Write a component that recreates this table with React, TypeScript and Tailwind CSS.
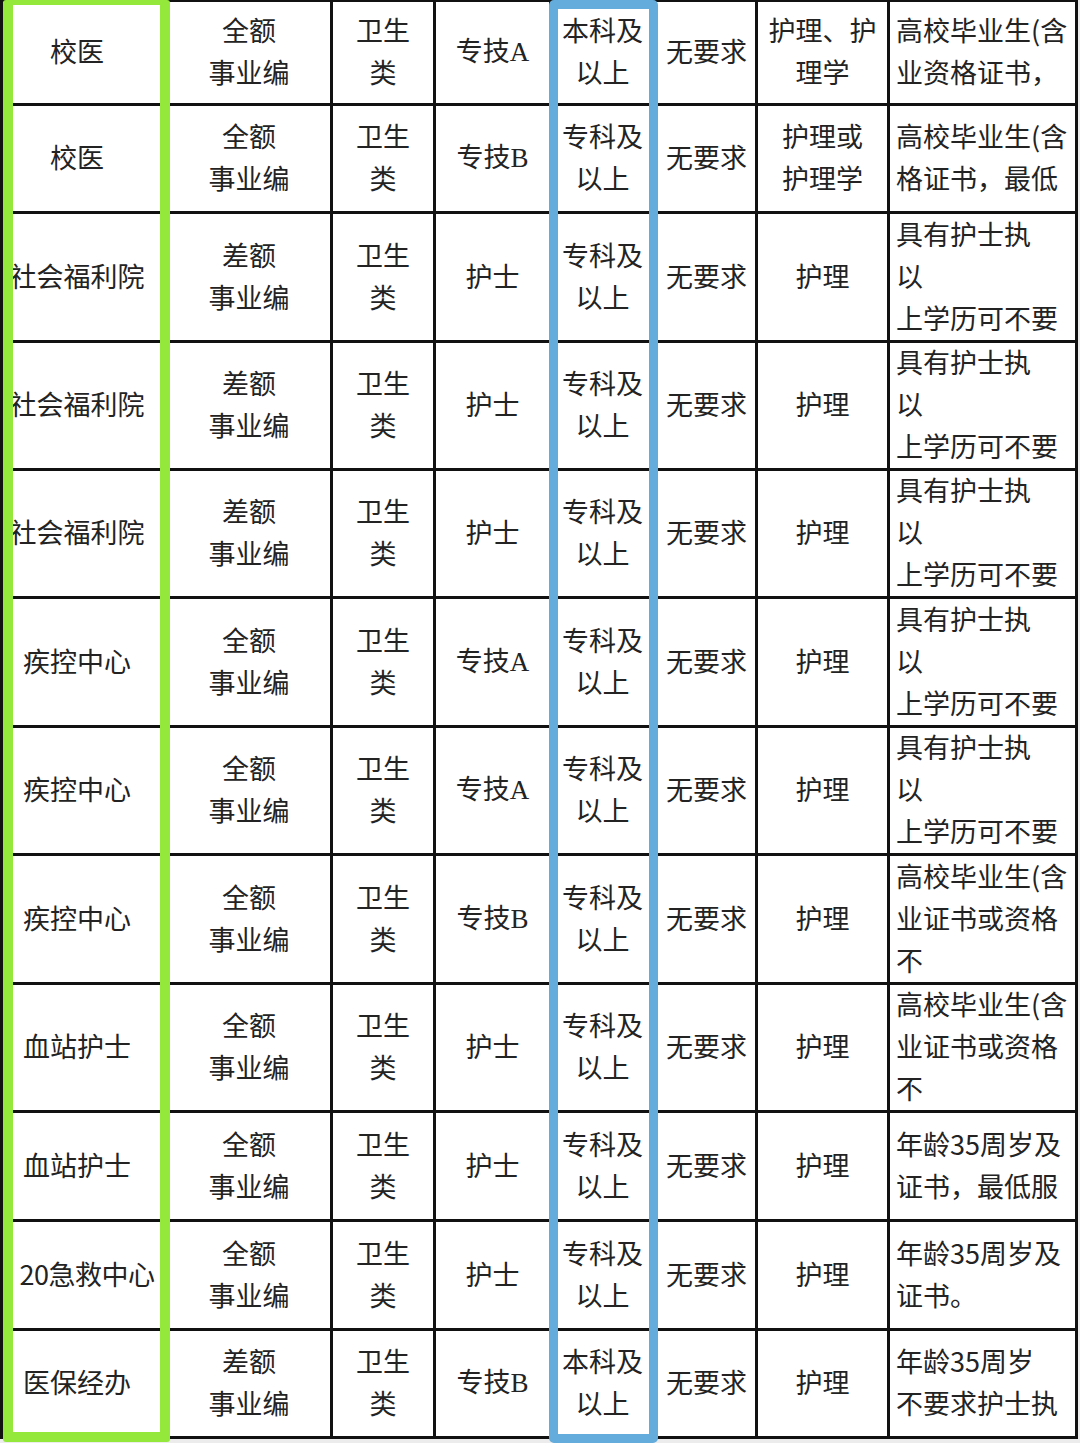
type Row = {
  unit: string;
  unitPad?: string;
  kind: string;
  post: string;
  level: string;
  edu: string;
  major: string[];
  note: string[];
};

const rows: Row[] = [
  { unit: "校医", kind: "全额", post: "专技A", level: "本科及", edu: "无要求", major: ["护理、护", "理学"], note: ["高校毕业生(含", "业资格证书，"] },
  { unit: "校医", kind: "全额", post: "专技B", level: "专科及", edu: "无要求", major: ["护理或", "护理学"], note: ["高校毕业生(含", "格证书，最低"] },
  { unit: "社会福利院", kind: "差额", post: "护士", level: "专科及", edu: "无要求", major: ["护理"], note: ["具有护士执", "以", "上学历可不要"] },
  { unit: "社会福利院", kind: "差额", post: "护士", level: "专科及", edu: "无要求", major: ["护理"], note: ["具有护士执", "以", "上学历可不要"] },
  { unit: "社会福利院", kind: "差额", post: "护士", level: "专科及", edu: "无要求", major: ["护理"], note: ["具有护士执", "以", "上学历可不要"] },
  { unit: "疾控中心", kind: "全额", post: "专技A", level: "专科及", edu: "无要求", major: ["护理"], note: ["具有护士执", "以", "上学历可不要"] },
  { unit: "疾控中心", kind: "全额", post: "专技A", level: "专科及", edu: "无要求", major: ["护理"], note: ["具有护士执", "以", "上学历可不要"] },
  { unit: "疾控中心", kind: "全额", post: "专技B", level: "专科及", edu: "无要求", major: ["护理"], note: ["高校毕业生(含", "业证书或资格", "不"] },
  { unit: "血站护士", kind: "全额", post: "护士", level: "专科及", edu: "无要求", major: ["护理"], note: ["高校毕业生(含", "业证书或资格", "不"] },
  { unit: "血站护士", kind: "全额", post: "护士", level: "专科及", edu: "无要求", major: ["护理"], note: ["年龄35周岁及", "证书，最低服"] },
  { unit: "20急救中心", unitPad: "pl-[8px] pr-[2px] tracking-[-0.5px]", kind: "全额", post: "护士", level: "专科及", edu: "无要求", major: ["护理"], note: ["年龄35周岁及", "证书。"] },
  { unit: "医保经办", kind: "差额", post: "专技B", level: "本科及", edu: "无要求", major: ["护理"], note: ["年龄35周岁", "不要求护士执"] },
];

const cell = "flex items-center justify-center bg-white pb-[3px] text-center leading-[42px] overflow-hidden whitespace-nowrap";

function Post({ text }: { text: string }) {
  const last = text.slice(-1);
  if (last === "A" || last === "B") {
    return (
      <span>
        {text.slice(0, -1)}
        <span className="font-['Liberation_Serif',serif]">{last}</span>
      </span>
    );
  }
  return <span>{text}</span>;
}

export default function App() {
  return (
    <div className="relative h-[1443px] w-[1080px] overflow-hidden bg-[#ececec] font-['Noto_Sans_CJK_SC','Noto_Sans',sans-serif] text-[27px] text-[#232323]">
      <div className="grid w-[1078px] grid-cols-[162px_162px_100px_113px_101px_99px_129px_185px] grid-rows-[101px_105px_126px_125px_125px_126px_125px_126px_125px_106px_106px_105px] gap-[3px] bg-[#111] p-[3px] pt-[2px]">
        {rows.map((r, i) => (
          <div key={i} className="contents">
            <div className={`${cell} ${r.unitPad ?? "pr-[14px]"}`}>{r.unit}</div>
            <div className={`${cell} flex-col`}>
              <span>{r.kind}</span>
              <span>事业编</span>
            </div>
            <div className={`${cell} flex-col`}>
              <span>卫生</span>
              <span>类</span>
            </div>
            <div className={cell}>
              <Post text={r.post} />
            </div>
            <div className={`${cell} flex-col`}>
              <span>{r.level}</span>
              <span>以上</span>
            </div>
            <div className={`${cell} pl-[2px]`}>{r.edu}</div>
            <div className={`${cell} flex-col`}>
              {r.major.map((m, j) => (
                <span key={j}>{m}</span>
              ))}
            </div>
            <div className={`${cell} flex-col !items-start pl-[6px] text-left`}>
              {r.note.map((n, j) => (
                <span key={j}>{n}</span>
              ))}
            </div>
          </div>
        ))}
      </div>

      {/* highlight frames drawn over the table */}
      <div className="pointer-events-none absolute left-[3px] top-0 h-[1442px] w-[167px] rounded-[3px] border-[10px] border-t-[5px] border-[#94e83c]" />
      <div className="pointer-events-none absolute left-[549px] top-0 h-[1443px] w-[109px] rounded-[5px] border-[9px] border-[#63acdb]" />
    </div>
  );
}
